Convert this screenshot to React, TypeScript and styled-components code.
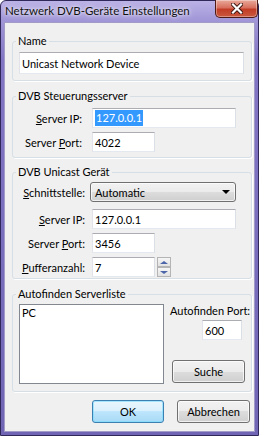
import React from 'react';
import styled, { createGlobalStyle } from 'styled-components';

const Global = createGlobalStyle`
  html, body { margin: 0; padding: 0; background: #ffffff; }
  body { width: 264px; height: 436px; overflow: hidden; font-family: Lato, "Noto Sans", sans-serif; }
  * { box-sizing: border-box; }
`;

const Window = styled.div`
  width: 259px;
  height: 436px;
  border: 1px solid #2f2858;
  border-radius: 6px 6px 0 0;
  background: linear-gradient(#bbb2e6, #a095d6 20px, #8175c4 60px, #7064b5);
  display: flex;
  flex-direction: column;
`;

const TitleBar = styled.div`
  height: 21px;
  display: flex;
  align-items: flex-start;
  justify-content: space-between;
  padding-left: 4px;
`;

const Title = styled.div`
  font-size: 11.5px;
  line-height: 18px;
  margin-top: 1px;
  color: #111;
  text-shadow: 0 0 6px rgba(255, 255, 255, 0.9), 0 0 3px rgba(255, 255, 255, 0.8);
`;

const CloseButton = styled.div`
  width: 43px;
  height: 18px;
  margin-top: -1px;
  border: 1px solid #4e1a14;
  border-top: none;
  border-radius: 0 0 5px 5px;
  background: linear-gradient(#e9a99b, #d8705e 45%, #c23d26 55%, #c9583d);
  box-shadow: inset 0 0 0 1px rgba(255, 255, 255, 0.35);
  display: flex;
  align-items: center;
  justify-content: center;
`;

const Client = styled.div`
  flex: 1;
  margin: 0 3px 3px 3px;
  border: 1px solid #a29bc8;
  background: #f0f0f0;
  padding: 11px 2px 0 7px;
  display: flex;
  flex-direction: column;
  font-size: 11px;
  color: #000;
`;

const Group = styled.fieldset<{ $top: number; $pt: number; $pb: number }>`
  margin: ${(p) => p.$top}px 0 0 0;
  padding: ${(p) => p.$pt}px 6px ${(p) => p.$pb}px 6px;
  border: 1px solid #d5dfe5;
  border-radius: 3px;
  box-shadow: 1px 1px 0 #ffffff;
  min-width: 0;
`;

const Legend = styled.legend`
  padding: 0 2px;
  margin-left: -3px;
  line-height: 14px;
`;

const Rows = styled.div`
  display: flex;
  flex-direction: column;
`;

const Row = styled.div<{ $gap?: number }>`
  display: flex;
  align-items: center;
  margin-top: ${(p) => p.$gap ?? 0}px;
`;

const Label = styled.div<{ $w: number }>`
  width: ${(p) => p.$w}px;
  flex-shrink: 0;
  text-align: right;
  margin-right: ${(p) => 92 - 19 - p.$w}px;
  white-space: nowrap;
`;

const Field = styled.div<{ $w: number; $h?: number; $mt?: number; $ml?: number }>`
  width: ${(p) => p.$w}px;
  flex-shrink: 0;
  height: ${(p) => p.$h ?? 20}px;
  margin-top: ${(p) => p.$mt ?? 0}px;
  margin-left: ${(p) => p.$ml ?? 0}px;
  border: 1px solid;
  border-color: #abadb3 #dbdfe6 #e3e9ef #e2e3ea;
  background: #ffffff;
  padding-left: 2px;
  display: flex;
  align-items: center;
  white-space: nowrap;
`;

const Selected = styled.span`
  background: #3399ff;
  color: #ffffff;
  line-height: 16px;
  padding: 0 1px;
`;

const Combo = styled.div`
  width: 146px;
  height: 20px;
  margin-left: -2px;
  border: 1px solid #707070;
  border-radius: 3px;
  background: linear-gradient(#f2f2f2, #ebebeb 50%, #dddddd 50%, #cfcfcf);
  box-shadow: inset 0 0 0 1px rgba(255, 255, 255, 0.7);
  display: flex;
  align-items: center;
  justify-content: space-between;
  padding: 0 5px 0 4px;
`;

const Arrow = styled.div`
  width: 0;
  height: 0;
  border-left: 4px solid transparent;
  border-right: 4px solid transparent;
  border-top: 4px solid #000;
`;

const Spin = styled.div`
  display: flex;
  flex-direction: column;
  margin-left: 2px;
`;

const SpinButton = styled.div`
  width: 14px;
  height: 10px;
  border: 1px solid #b4b4b4;
  background: linear-gradient(#f6f6f6, #e2e2e2);
  display: flex;
  align-items: center;
  justify-content: center;
`;

const SpinArrow = styled.div<{ $up?: boolean }>`
  width: 0;
  height: 0;
  border-left: 4px solid transparent;
  border-right: 4px solid transparent;
  ${(p) => (p.$up ? 'border-bottom: 3px solid #4c64a8;' : 'border-top: 3px solid #4c64a8;')}
`;

const AutoBody = styled.div`
  display: flex;
`;

const ListBox = styled.div`
  width: 145px;
  flex-shrink: 0;
  height: 80px;
  border: 1px solid #828790;
  background: #ffffff;
  padding: 1px 2px;
  line-height: 14px;
`;

const SideColumn = styled.div`
  display: flex;
  flex-direction: column;
  align-items: flex-start;
  margin-left: 6px;
`;

const SideLabel = styled.div`
  line-height: 14px;
  white-space: nowrap;
`;

const Button = styled.div<{ $w: number; $default?: boolean; $mt?: number; $ml?: number }>`
  width: ${(p) => p.$w}px;
  flex-shrink: 0;
  height: 23px;
  margin-top: ${(p) => p.$mt ?? 0}px;
  margin-left: ${(p) => p.$ml ?? 0}px;
  border: 1px solid ${(p) => (p.$default ? '#3c7fb1' : '#707070')};
  border-radius: 3px;
  background: ${(p) =>
    p.$default
      ? 'linear-gradient(#eaf6fd, #d9f0fc 50%, #bee6fd 50%, #a7d9f5)'
      : 'linear-gradient(#f2f2f2, #ebebeb 50%, #dddddd 50%, #cfcfcf)'};
  box-shadow: inset 0 0 0 1px ${(p) => (p.$default ? 'rgba(120,220,255,0.6)' : 'rgba(255,255,255,0.7)')};
  display: flex;
  align-items: center;
  justify-content: center;
`;

const ButtonRow = styled.div`
  display: flex;
  justify-content: flex-end;
  gap: 13px;
  margin-top: 8px;
  margin-right: 2px;
`;

export default function App() {
  return (
    <>
      <Global />
      <Window>
        <TitleBar>
          <Title>Netzwerk DVB-Geräte Einstellungen</Title>
          <CloseButton>
            <svg width="12" height="11" viewBox="0 0 12 11">
              <path d="M2 1.5 L10 9.5 M10 1.5 L2 9.5" stroke="#3a1410" strokeWidth="4" strokeLinecap="square" />
              <path d="M2 1.5 L10 9.5 M10 1.5 L2 9.5" stroke="#ffffff" strokeWidth="2.2" strokeLinecap="square" />
            </svg>
          </CloseButton>
        </TitleBar>
        <Client>
          <Group $top={0} $pt={4} $pb={6}>
            <Legend>Name</Legend>
            <Field $w={225} $h={22}>Unicast Network Device</Field>
          </Group>

          <Group $top={8} $pt={5} $pb={5}>
            <Legend>DVB Steuerungsserver</Legend>
            <Rows>
              <Row>
                <Label $w={63}><u>S</u>erver IP:</Label>
                <Field $w={144}><Selected>127.0.0.1</Selected></Field>
              </Row>
              <Row $gap={4}>
                <Label $w={63}>Server <u>P</u>ort:</Label>
                <Field $w={63}>4022</Field>
              </Row>
            </Rows>
          </Group>

          <Group $top={7} $pt={3} $pb={1}>
            <Legend>DVB Unicast Gerät</Legend>
            <Rows>
              <Row>
                <Label $w={66}><u>S</u>chnittstelle:</Label>
                <Combo>
                  <span>Automatic</span>
                  <Arrow />
                </Combo>
              </Row>
              <Row $gap={7}>
                <Label $w={66}><u>S</u>erver IP:</Label>
                <Field $w={144}>127.0.0.1</Field>
              </Row>
              <Row $gap={4}>
                <Label $w={66}>Server <u>P</u>ort:</Label>
                <Field $w={63}>3456</Field>
              </Row>
              <Row $gap={4}>
                <Label $w={66}><u>P</u>ufferanzahl:</Label>
                <Field $w={63}>7</Field>
                <Spin>
                  <SpinButton><SpinArrow $up /></SpinButton>
                  <SpinButton><SpinArrow /></SpinButton>
                </Spin>
              </Row>
            </Rows>
          </Group>

          <Group $top={8} $pt={3} $pb={7}>
            <Legend>Autofinden Serverliste</Legend>
            <AutoBody>
              <ListBox>PC</ListBox>
              <SideColumn>
                <SideLabel>Autofinden Port:</SideLabel>
                <Field $w={40} $mt={2} $ml={32}>600</Field>
                <Button $w={73} $mt={20} $ml={2}>Suche</Button>
              </SideColumn>
            </AutoBody>
          </Group>

          <ButtonRow>
            <Button $w={72} $default>OK</Button>
            <Button $w={73}>Abbrechen</Button>
          </ButtonRow>
        </Client>
      </Window>
    </>
  );
}
